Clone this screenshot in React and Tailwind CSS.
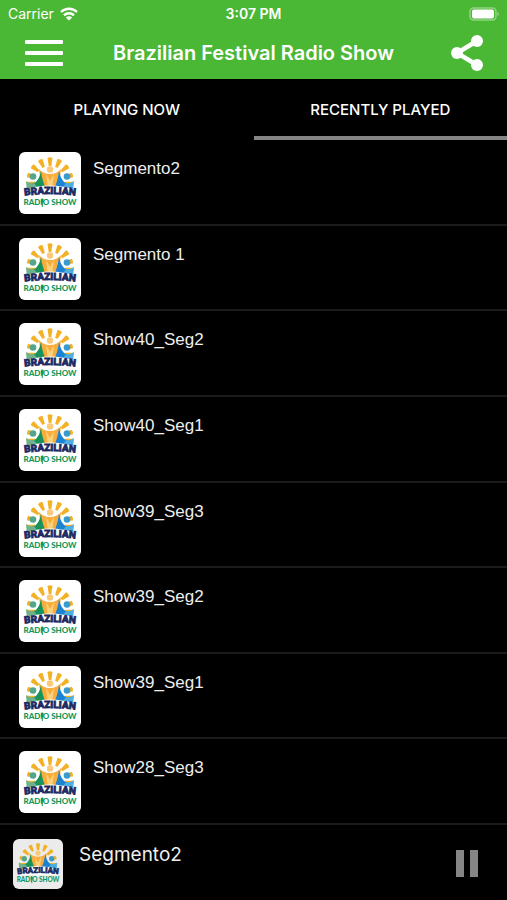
import React from "react";

const tracks = [
  "Segmento2",
  "Segmento 1",
  "Show40_Seg2",
  "Show40_Seg1",
  "Show39_Seg3",
  "Show39_Seg2",
  "Show39_Seg1",
  "Show28_Seg3",
];

const rays = [-98, -75, -50, -25, 0, 25, 50, 75, 98];

const ShowLogo = ({ id, className }) => (
  <svg viewBox="0 0 62 62" className={className} role="img" aria-label="Show logo">
    {rays.map((angle) => (
      <path
        key={angle}
        d="M28.500 6q2.500-1.500 5 0l-1.200 8h-2.600z"
        fill="#f3b226"
        transform={`rotate(${angle} 31 29)`}
      />
    ))}
    <path d="M20 17q4 5 11 5t11-5q-1 12-5 22H25q-4-10-5-22z" fill="#f9ad3c" />
    <path d="M27 22l4 7 4-7-2 15h-4z" fill="#fbd27c" />
    <circle cx="31" cy="17.500" r="3.200" fill="#fbc977" />
    <circle cx="14" cy="24.500" r="3.300" fill="#55a58b" />
    <path d="M22 19q1 10 6 20H8q1-7 7-8 5-2 7-12z" fill="#17945b" />
    <path d="M7 29q4 3 8 2l6 8H8z" fill="#6fb18c" />
    <circle cx="48" cy="24.500" r="3.300" fill="#3a9bd0" />
    <path d="M40 19q-1 10-6 20H54q-1-7-7-8-5-2-7-12z" fill="#1c82d2" />
    <path d="M55 29q-4 3-8 2l-6 8h13z" fill="#4eaee0" />
    <path d="M5 38Q31 29 57 38v7H5z" fill="#fff" />
    <path id={`${id}-arc`} d="M3 44Q31 40 59 44" fill="none" />
    <text
      fontFamily="Roboto, sans-serif"
      fontSize="10"
      fontWeight="800"
      fill="#1c2a63"
      stroke="#1c2a63"
      strokeWidth=".8"
      textAnchor="middle"
    >
      <textPath href={`#${id}-arc`} startOffset="50%">
        BRAZILIAN
      </textPath>
    </text>
    <text
      x="31"
      y="53"
      fontFamily="Lato, sans-serif"
      fontSize="8"
      fontWeight="900"
      fill="#12975a"
      textAnchor="middle"
    >
      RADIO SHOW
    </text>
    <rect x="22" y="46.500" width="2.600" height="4.500" rx="1.300" fill="#12975a" />
    <path d="M23.300 51v4" stroke="#12975a" strokeWidth="1" />
  </svg>
);

const StatusBar = () => (
  <div className="grid h-7 grid-cols-3 items-center px-2 text-sm">
    <div className="flex items-center gap-[6px]">
      <span>Carrier</span>
      <svg viewBox="0 0 18 14" className="h-[14px] w-[18px]" fill="none" stroke="currentColor">
        <path d="M1 5a11.500 11.500 0 0 1 16 0" strokeWidth="2.400" />
        <path d="M4 8.300a7.200 7.200 0 0 1 10 0" strokeWidth="2.400" />
        <path d="M9 13.500L5.800 10.600a4.600 4.600 0 0 1 6.400 0z" fill="currentColor" stroke="none" />
      </svg>
    </div>
    <span className="text-center font-semibold">3:07 PM</span>
    <svg viewBox="0 0 30 14" className="h-[14px] w-[30px] justify-self-end">
      <rect x="1" y="1" width="26" height="12" rx="3.500" fill="none" stroke="#fff" strokeOpacity=".4" strokeWidth="1.500" />
      <rect x="3" y="2.500" width="22" height="9" rx="2" fill="#fff" />
      <path d="M28.500 5v4q1.500-.6 1.500-2t-1.500-2z" fill="#fff" fillOpacity=".4" />
    </svg>
  </div>
);

const App = () => {
  return (
    <div className="flex min-h-screen flex-col bg-black font-['Inter',sans-serif] text-white">
      <header className="bg-[#4ab735]">
        <StatusBar />
        <div className="grid h-[51px] grid-cols-[40px_1fr_40px] items-center px-6 pb-[2px]">
          <button aria-label="Menu" className="flex justify-center">
            <svg viewBox="0 0 38 26" className="h-[26px] w-[38px]" fill="#fff">
              <rect width="38" height="4" rx="1" />
              <rect y="11" width="38" height="4" rx="1" />
              <rect y="22" width="38" height="4" rx="1" />
            </svg>
          </button>
          <h1 className="text-center text-xl font-semibold">Brazilian Festival Radio Show</h1>
          <button aria-label="Share" className="justify-self-end">
            <svg viewBox="0 0 32 36" className="h-9 w-8" fill="#fff">
              <path d="M26 6L6 18l20 12" fill="none" stroke="#fff" strokeWidth="4.500" />
              <circle cx="26" cy="6" r="6" />
              <circle cx="6" cy="18" r="6" />
              <circle cx="26" cy="30" r="6" />
            </svg>
          </button>
        </div>
      </header>

      <nav className="grid h-[61px] grid-cols-2 text-[15px] font-medium">
        <button className="border-b-4 border-transparent pt-[6px]">PLAYING NOW</button>
        <button className="border-b-4 border-[#858585] pt-[6px]">RECENTLY PLAYED</button>
      </nav>

      <ul className="flex flex-1 flex-col font-['Liberation_Sans',sans-serif] text-[17px] text-[#eeeeee]">
        {tracks.map((track, index) => (
          <li
            key={track}
            className="flex flex-1 items-start gap-3 border-b-2 border-[#1b1b1b] px-[19px] pt-3 pb-2"
          >
            <ShowLogo id={`track-${index}`} className="size-[62px] rounded-md bg-white" />
            <span className="pt-1 leading-[26px]">{track}</span>
          </li>
        ))}
      </ul>

      <footer className="flex h-[75px] items-start justify-between pt-[14px] pr-[29px] pl-[13px]">
        <div className="flex gap-4">
          <ShowLogo id="current" className="size-[50px] rounded-md bg-[#ebebeb]" />
          <span className="text-[19px] leading-8 text-[#eeeeee]">Segmento2</span>
        </div>
        <button aria-label="Pause" className="flex h-12 items-center gap-[6px]">
          <span className="h-[27px] w-2 bg-[#858585]" />
          <span className="h-[27px] w-2 bg-[#858585]" />
        </button>
      </footer>
    </div>
  );
};

export default App;
